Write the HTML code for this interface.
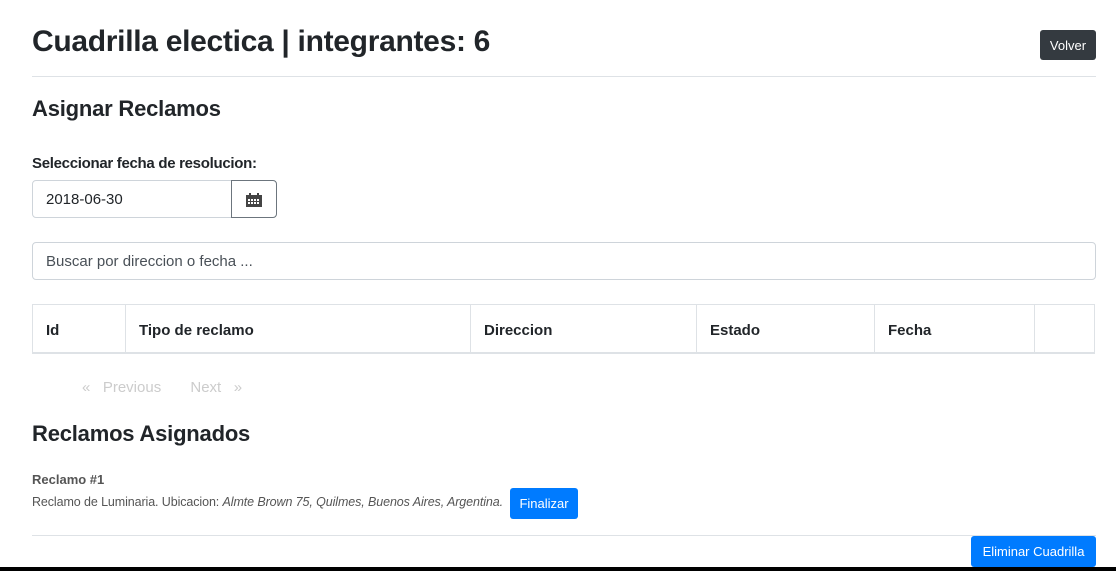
<!DOCTYPE html><html><head><style>
body{margin:0;width:1116px;height:571px;overflow:hidden;background:#fff;font-family:"Liberation Sans",sans-serif;color:#212529;position:relative}
.a{position:absolute}
.btn{position:absolute;color:#fff;border-radius:3px;font-size:13px;text-align:center}
</style></head><body>
<div class="a" style="left:32px;top:25px;font-size:30px;font-weight:bold;letter-spacing:-0.3px">Cuadrilla electica | integrantes: 6</div>
<div class="btn" style="left:1040px;top:30px;width:56px;height:30px;line-height:31px;background:#343a40">Volver</div>
<div class="a" style="left:32px;top:76px;width:1064px;border-top:1px solid #dee2e6"></div>
<div class="a" style="left:32px;top:96px;font-size:22px;font-weight:bold;letter-spacing:-0.2px">Asignar Reclamos</div>
<div class="a" style="left:32px;top:155px;font-size:15px;font-weight:bold;letter-spacing:-0.3px">Seleccionar fecha de resolucion:</div>
<div class="a" style="left:32px;top:180px;border:1px solid #ced4da;border-radius:4px 0 0 4px;font-size:15px;line-height:38px;padding-left:13px;box-sizing:border-box;height:38px;width:200px">2018-06-30</div>
<div class="a" style="left:231px;top:180px;width:46px;height:38px;border:1px solid #6c757d;border-radius:0 4px 4px 0;box-sizing:border-box">
<svg width="18" height="16" style="position:absolute;left:13px;top:11px" viewBox="0 0 18 16"><rect x="1" y="3" width="16" height="12" fill="#444"/><rect x="4" y="1" width="2" height="4" fill="#444"/><rect x="12" y="1" width="2" height="4" fill="#444"/><g fill="#fff"><rect x="3" y="7" width="2" height="2"/><rect x="6" y="7" width="2" height="2"/><rect x="9" y="7" width="2" height="2"/><rect x="12" y="7" width="2" height="2"/><rect x="3" y="10" width="2" height="2"/><rect x="6" y="10" width="2" height="2"/><rect x="9" y="10" width="2" height="2"/><rect x="12" y="10" width="2" height="2"/></g></svg></div>
<div class="a" style="left:32px;top:242px;width:1064px;height:38px;border:1px solid #ced4da;border-radius:4px;box-sizing:border-box;font-size:15px;line-height:38px;padding-left:13px;color:#495057">Buscar por direccion o fecha ...</div>
<div class="a" style="left:32px;top:304px;width:1063px;height:50px;border:1px solid #dee2e6;border-bottom:2px solid #dee2e6;box-sizing:border-box;font-size:15px;font-weight:bold">
<span class="a" style="left:13px;top:17px">Id</span><span class="a" style="left:106px;top:17px">Tipo de reclamo</span><span class="a" style="left:451px;top:17px">Direccion</span><span class="a" style="left:677px;top:17px">Estado</span><span class="a" style="left:855px;top:17px">Fecha</span>
<div class="a" style="left:92px;top:0;height:48px;border-left:1px solid #dee2e6"></div><div class="a" style="left:437px;top:0;height:48px;border-left:1px solid #dee2e6"></div><div class="a" style="left:663px;top:0;height:48px;border-left:1px solid #dee2e6"></div><div class="a" style="left:841px;top:0;height:48px;border-left:1px solid #dee2e6"></div><div class="a" style="left:1001px;top:0;height:48px;border-left:1px solid #dee2e6"></div></div>
<div class="a" style="left:82px;top:379px;font-size:15px;color:#ccc">«&nbsp;&nbsp; Previous&nbsp;&nbsp;&nbsp;&nbsp;&nbsp;&nbsp; Next&nbsp;&nbsp; »</div>
<div class="a" style="left:32px;top:421px;font-size:22px;font-weight:bold;letter-spacing:-0.2px">Reclamos Asignados</div>
<div class="a" style="left:32px;top:472px;font-size:13px;font-weight:bold;color:#555">Reclamo #1</div>
<div class="a" style="left:32px;top:495px;font-size:12.5px;color:#555;letter-spacing:-0.1px">Reclamo de Luminaria. Ubicacion: <i>Almte Brown 75, Quilmes, Buenos Aires, Argentina.</i></div>
<div class="btn" style="left:510px;top:488px;width:68px;height:31px;line-height:31px;background:#007bff">Finalizar</div>
<div class="a" style="left:32px;top:535px;width:1064px;border-top:1px solid #dee2e6"></div>
<div class="btn" style="left:971px;top:536px;width:125px;height:31px;line-height:31px;background:#007bff">Eliminar Cuadrilla</div>
<div class="a" style="left:0;top:567px;width:1116px;height:4px;background:#000"></div>
</body></html>
